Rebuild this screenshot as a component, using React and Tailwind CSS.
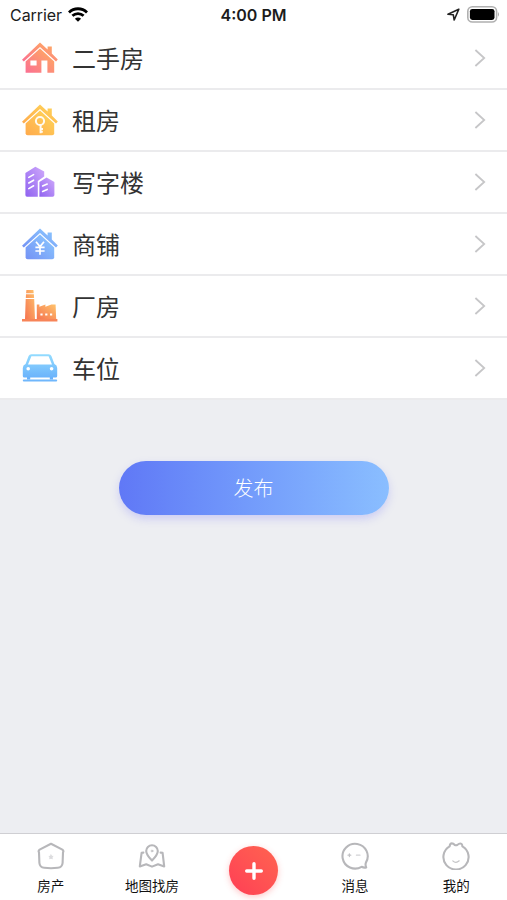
import React from 'react';

const Gradient = ({ id, from, to, diagonal = true }) => (
  <defs>
    <linearGradient id={id} x1={diagonal ? '1' : '0'} y1="0" x2="0" y2="1">
      <stop offset="0" stopColor={from} />
      <stop offset="1" stopColor={to} />
    </linearGradient>
  </defs>
);

const Icon = ({ children }) => (
  <svg className="size-9 shrink-0" viewBox="0 0 36 36" fill="none">
    {children}
  </svg>
);

const ROOF = 'M0 19.8 L18 2.6 L25.6 9.6 V6.4 H29.8 V13.6 L35.8 19.4 L34 21.6 L18 7 L1.8 21.6 Z';

const HouseIcon = () => (
  <Icon>
    <Gradient id="house" from="#ffb05c" to="#fb6f92" />
    <path fill="url(#house)" d={ROOF} />
    <path
      fill="url(#house)"
      fillRule="evenodd"
      d="M18 8.4 L32.2 21.4 V32.8 H25.4 V20.4 H19.4 V32.8 H3.6 V21.4 Z M8.4 20.4 V25.4 H14.6 V20.4 Z"
    />
  </Icon>
);

const RentIcon = () => (
  <Icon>
    <Gradient id="rent" from="#ffd75a" to="#ffaa4c" />
    <path fill="url(#rent)" d={ROOF} />
    <path fill="url(#rent)" d="M18 8.4 L32.2 21.4 V31.2 Q32.2 33.2 30.2 33.2 H5.6 Q3.6 33.2 3.6 31.2 V21.4 Z" />
    <circle cx="18" cy="19" r="4.1" stroke="#fffaf0" strokeWidth="2" />
    <path d="M18.6 22.6 V31.2 M18.6 27 H21 M18.6 29.8 H20.8" stroke="#fffaf0" strokeWidth="2" />
  </Icon>
);

const OfficeIcon = () => (
  <Icon>
    <Gradient id="office" from="#cfa9fb" to="#8f62f0" />
    <path fill="url(#office)" d="M3.4 9 L13.4 2.8 L22.2 7.6 V12.4 L15.8 17 V32.8 H5 Q3.4 32.8 3.4 31 Z" />
    <path fill="url(#office)" d="M17.4 18 L24.6 13.6 L32.4 18 V31 Q32.4 32.8 30.6 32.8 H17.4 Z" />
    <path
      d="M6.8 13.4 L11.6 10.6 M6.8 19 L11.6 16.2 M6.8 24.6 L11.6 21.8 M20.6 22 L25.2 20 M20.6 27.4 L25.2 25.4"
      stroke="#fff"
      strokeWidth="1.6"
      strokeLinecap="round"
    />
  </Icon>
);

const ShopIcon = () => (
  <Icon>
    <Gradient id="shop" from="#8ccbff" to="#7492f5" />
    <path fill="url(#shop)" d={ROOF} />
    <path fill="url(#shop)" d="M18 8.4 L32.2 21.4 V31.2 Q32.2 33.2 30.2 33.2 H5.6 Q3.6 33.2 3.6 31.2 V21.4 Z" />
    <path
      d="M14 15.8 L18 20.6 L22 15.8 M18 20.6 V28.8 M13.4 21.4 H22.6 M13.4 25 H22.6"
      stroke="#fff"
      strokeWidth="1.7"
    />
  </Icon>
);

const FactoryIcon = () => (
  <Icon>
    <Gradient id="factory" from="#ffc46c" to="#f57350" />
    <path fill="url(#factory)" d="M4.4 2 H11.4 L11.7 5.2 H4.1 Z M4 6.2 H11.9 L12.1 10 H3.8 Z M3.7 11 H12.2 L13 31.2 H3 Z" />
    <path fill="url(#factory)" d="M14.8 16.4 H17.4 V18.8 L23.4 16.4 V18.8 L29.4 16.4 H33.6 L34.2 31.2 H14.8 Z" />
    <path fill="#f78458" d="M0 31 H35.4 V33.6 H0 Z" />
    <path fill="#fff" d="M18.4 25.4 h2.2 v2.2 h-2.2 z M23.2 25.4 h2.2 v2.2 h-2.2 z M28 25.4 h2.2 v2.2 h-2.2 z" />
  </Icon>
);

const CarIcon = () => (
  <Icon>
    <Gradient id="car" from="#93dcff" to="#68b0fb" diagonal={false} />
    <path
      fill="url(#car)"
      fillRule="evenodd"
      d="M9.4 4.2 H26.6 Q28.6 4.2 29.4 6 L32.4 14 Q35.2 15.2 35.2 18 V26 Q35.2 27.6 33.6 27.6 H31 V29.4 H27.8 V27.6 H8.2 V29.4 H5 V27.6 H2.4 Q.8 27.6 .8 26 V18 Q.8 15.2 3.6 14 L6.6 6 Q7.4 4.2 9.4 4.2 Z M9.4 6.2 L6 14.4 H30 L26.6 6.2 Z"
    />
    <circle cx="6.2" cy="18.8" r="1.8" fill="#fff" />
    <circle cx="29.6" cy="18.8" r="1.8" fill="#fff" />
    <path d="M1.8 30.6 H34.2" stroke="#70b7fc" strokeWidth="2" strokeLinecap="round" />
  </Icon>
);

const ROWS = [
  ['二手房', HouseIcon],
  ['租房', RentIcon],
  ['写字楼', OfficeIcon],
  ['商铺', ShopIcon],
  ['厂房', FactoryIcon],
  ['车位', CarIcon],
];

const StatusBar = () => (
  <header className="grid h-7 grid-cols-3 items-center bg-white pt-px font-['Inter','Liberation_Sans',sans-serif] text-[#1c1c1c]">
    <div className="flex items-center gap-[6px] pl-[10px]">
      <span className="text-[16px] leading-6 tracking-[-0.05px]">Carrier</span>
      <svg className="h-[15px] w-5" viewBox="0 0 20 15" fill="none" stroke="#000" strokeWidth="2.8">
        <path d="M1 5.4 C6 .5 14 .5 19 5.4" />
        <path d="M4.4 8.8 C7.6 5.8 12.4 5.8 15.6 8.8" />
        <path d="M10 14.8 L6.9 11.7 C8.7 10.1 11.3 10.1 13.1 11.7 Z" fill="#000" stroke="none" />
      </svg>
    </div>
    <span className="text-center text-[16px] leading-6 font-semibold">4:00 PM</span>
    <div className="flex items-center justify-end gap-[7px] pr-[7px]">
      <svg className="h-[13px] w-[13px]" viewBox="0 0 13 13" fill="none" stroke="#222" strokeWidth="1.6" strokeLinejoin="round">
        <path d="M11.8 1.2 L1 6.3 L6.3 6.8 L7.2 12 Z" />
      </svg>
      <svg className="h-[17px] w-[33px]" viewBox="0 0 33 17" fill="none">
        <rect x=".8" y=".8" width="28.8" height="15.2" rx="4.6" stroke="#b0b0b0" strokeWidth="1.6" />
        <rect x="2.9" y="2.9" width="24.6" height="11" rx="2.4" fill="#000" />
        <path d="M31 6 Q33 8.4 31 10.8 Z" fill="#aaa" />
      </svg>
    </div>
  </header>
);

const HomeTab = () => (
  <>
    <path d="M14 1.8 L25.4 7.6 Q27 8.8 26 10.4 L25.6 21 Q25.2 25.4 20.8 25.8 Q14 26.6 7.2 25.8 Q2.8 25.4 2.4 21 L2 10.4 Q1 8.8 2.6 7.6 Z" />
    <path d="M14 12.8 l.7 1.4 1.5.2 -1.1 1 .3 1.5 -1.4-.7 -1.4.7 .3-1.5 -1.1-1 1.5-.2 Z" fill="#dcdcdf" strokeWidth=".5" stroke="#d2d2d5" />
  </>
);

const MapTab = () => (
  <>
    <path d="M14 18.6 Q8.2 12.6 8.2 9 A5.8 5.8 0 0 1 19.8 9 Q19.8 12.6 14 18.6 Z" />
    <circle cx="14" cy="9" r=".9" strokeWidth=".8" />
    <path d="M5.4 10.6 L3.6 10.8 L1.8 24.4 L8.2 22.2 L14 24.6 L20 22.2 L26.2 24.4 L24.6 10.8 L22.6 10.6" />
  </>
);

const MessageTab = () => (
  <>
    <path d="M25 20.4 A12.6 12.4 0 1 0 20.6 24.8 Q23 26 25.2 25.4 Q24 22.8 25 20.4 Z" />
    <path d="M7 13.2 h2.8 M8.4 11.8 v2.8" strokeWidth="1.2" stroke="#c2c2c5" />
    <path d="M15.4 13.2 h3.6" strokeWidth="1.2" stroke="#d2d2d5" />
  </>
);

const ProfileTab = () => (
  <>
    <path d="M7.6 4.4 Q8 1.4 9.8 1.4 Q11.4 1.4 12.8 3 Q14 3.6 15.2 3 Q17.8 .8 19.4 1.8 Q20.4 2.6 20.4 4.4 A12.6 12.4 0 1 1 7.6 4.4 Z" />
    <path d="M10.8 18.8 Q13.8 21.8 17.2 18.8" strokeWidth="1.2" stroke="#c4c4c6" />
  </>
);

const Tab = ({ label, children }) => (
  <div className="flex flex-1 flex-col items-center pt-[8px]">
    <svg className="size-7" viewBox="0 0 28 28" fill="none" stroke="#b7b7ba" strokeWidth="2.1" strokeLinejoin="round" strokeLinecap="round">
      {children}
    </svg>
    <span className="mt-[5px] text-[13.5px] leading-5 text-[#111]">{label}</span>
  </div>
);

export default function App() {
  return (
    <div className="flex h-[900px] w-[507px] flex-col overflow-hidden bg-[#edeef2] font-['Noto_Sans_CJK_SC',sans-serif]">
      <StatusBar />
      <ul>
        {ROWS.map(([label, RowIcon]) => (
          <li key={label} className="flex h-[62px] items-center border-b-2 border-[#ebebed] bg-white pr-[21px] pl-[22px]">
            <RowIcon />
            <span className="ml-[14px] flex-1 text-[24px] leading-9 text-[#333]">{label}</span>
            <svg className="h-[18px] w-3" viewBox="0 0 12 18" fill="none" stroke="#c6c6c8" strokeWidth="1.8">
              <path d="M1.4 1 L10.2 9 L1.4 17" />
            </svg>
          </li>
        ))}
      </ul>
      <main className="flex flex-1 flex-col items-center pt-[61px]">
        <button className="h-[54px] w-[270px] rounded-full bg-linear-to-r from-[#6078f6] to-[#8abeff] pb-px text-[20px] font-light text-white shadow-[0_4px_8px_rgba(130,130,250,0.3)]">
          发布
        </button>
      </main>
      <nav className="flex h-[67px] border-t border-[#cfcfd3] bg-white">
        <Tab label="房产"><HomeTab /></Tab>
        <Tab label="地图找房"><MapTab /></Tab>
        <div className="flex flex-1 justify-center pt-[12px]">
          <button className="flex size-[49px] items-center justify-center rounded-full bg-linear-to-tr from-[#ff3d55] to-[#ff6350] shadow-[0_2px_6px_rgba(255,75,80,0.3)]">
            <svg className="size-[18px]" viewBox="0 0 18 18" stroke="#fff" strokeWidth="3.4" strokeLinecap="round">
              <path d="M9 1.7 V16.3 M1.7 9 H16.3" />
            </svg>
          </button>
        </div>
        <Tab label="消息"><MessageTab /></Tab>
        <Tab label="我的"><ProfileTab /></Tab>
      </nav>
    </div>
  );
}
